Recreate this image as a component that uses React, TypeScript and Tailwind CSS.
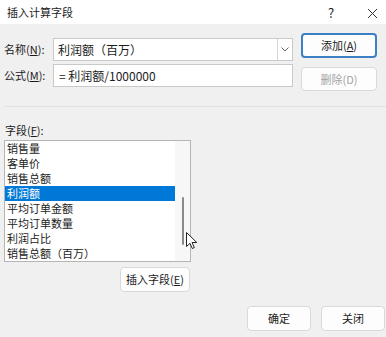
const fields = ["销售量", "客单价", "销售总额", "利润额", "平均订单金额", "平均订单数量", "利润占比", "销售总额（百万）"];

function Btn({ children, className = "", disabled = false, primary = false }: { children: React.ReactNode; className?: string; disabled?: boolean; primary?: boolean }) {
  return (
    <div
      className={`flex items-center justify-center rounded-[4px] bg-[#fdfdfd] text-[11px] ${
        primary ? "border-2 border-[#3b7fc4]" : "border border-[#d9d9d9]"
      } ${disabled ? "text-[#a3a3a3]" : "text-[#1b1b1b]"} ${className}`}
    >
      {children}
    </div>
  );
}

export default function App() {
  return (
    <div
      className="w-[386px] h-[337px] overflow-hidden bg-[#f0f0f0] text-[#1b1b1b] relative"
      style={{ fontFamily: '"Noto Sans CJK SC", "Microsoft YaHei", sans-serif' }}
    >
      {/* title bar */}
      <div className="h-[24px] bg-white flex items-center pl-[7px] pr-[8px] text-[11px]">
        <span className="flex-1 pt-[1px]">插入计算字段</span>
        <span className="w-[12px] text-center mr-[30px] pt-[2px] text-[13px]">?</span>
        <svg width="11" height="11" viewBox="0 0 11 11" className="mt-[2px]">
          <path d="M1 1L10 10M10 1L1 10" stroke="#333" strokeWidth="1" />
        </svg>
      </div>

      {/* name / formula */}
      <div className="flex pl-[4px] pt-[9px]">
        <div className="flex flex-col gap-[3px] pt-[5px] w-[289px]">
          <div className="flex items-center">
            <span className="w-[49px] text-[11px]">
              名称(<span className="underline">N</span>):
            </span>
            <div className="w-[240px] h-[23px] bg-white border border-[#c9c9c9] flex items-center">
              <span className="flex-1 pl-[4px] text-[12px]">利润额（百万）</span>
              <div className="w-[15px] h-full border-l border-[#d6d6d6] flex items-center justify-center">
                <svg width="8" height="5" viewBox="0 0 8 5">
                  <path d="M0.5 0.5L4 4L7.5 0.5" fill="none" stroke="#666" strokeWidth="1" />
                </svg>
              </div>
            </div>
          </div>
          <div className="flex items-center">
            <span className="w-[49px] text-[11px]">
              公式(<span className="underline">M</span>):
            </span>
            <div className="w-[240px] h-[23px] bg-white border border-[#c9c9c9] flex items-center pl-[5px] text-[12px]">
              = 利润额/1000000
            </div>
          </div>
        </div>
        <div className="flex flex-col gap-[9px] ml-[8px]">
          <Btn primary className="w-[76px] h-[25px]">
            添加(<span className="underline">A</span>)
          </Btn>
          <Btn disabled className="w-[76px] h-[24px]">
            删除(D)
          </Btn>
        </div>
      </div>

      {/* separator */}
      <div className="ml-[4px] mt-[15px] h-px bg-[#e2e2e2]" />

      {/* fields */}
      <div className="pl-[5px] mt-[15px] text-[11px] leading-[16px]">
        字段(<span className="underline">F</span>):
      </div>
      <div className="ml-[4px] mt-[2px] w-[187px] h-[122px] border border-[#b5b5b5] bg-white flex">
        <div className="flex-1 flex flex-col text-[11px]">
          {fields.map((f, i) => (
            <div
              key={f}
              className={`h-[15px] leading-[15px] pl-[2px] ${i === 3 ? "bg-[#0078d7] text-white" : ""}`}
            >
              {f}
            </div>
          ))}
        </div>
        <div className="w-[15px] bg-[#f7f7f7] flex justify-center pt-[56px]">
          <div className="w-[2px] h-[48px] bg-[#8a8a8a] rounded-full" />
        </div>
      </div>

      <div className="flex pl-[120px] mt-[5px]">
        <Btn className="w-[70px] h-[25px]">
          插入字段(<span className="underline">E</span>)
        </Btn>
      </div>

      <div className="flex justify-end gap-[10px] pr-[1px] mt-[14px]">
        <Btn className="w-[64px] h-[25px]">确定</Btn>
        <Btn className="w-[64px] h-[25px]">关闭</Btn>
      </div>

      {/* mouse cursor */}
      <svg width="12" height="18" viewBox="0 0 12 18" className="absolute left-[186px] top-[232px]">
        <path d="M0.5 0.5V14.5L4 11.3L6.3 16.5L8.3 15.6L6.1 10.5H10.8Z" fill="white" stroke="#222" strokeWidth="1" />
      </svg>
    </div>
  );
}
